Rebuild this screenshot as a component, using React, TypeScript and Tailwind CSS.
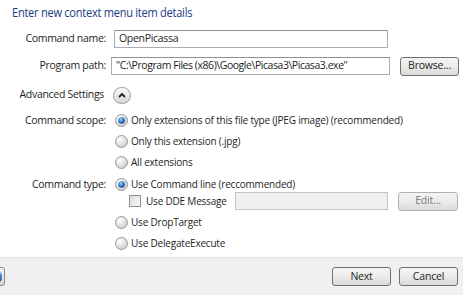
import React from 'react';

const font = { fontFamily: '"Open Sans", "Noto Sans", sans-serif' };

const Radio: React.FC<{ checked?: boolean }> = ({ checked }) => (
  <svg width="13" height="13" viewBox="0 0 13 13" className="shrink-0">
    <defs>
      <radialGradient id="rg" cx="0.35" cy="0.3" r="0.8">
        <stop offset="0" stopColor="#ffffff" />
        <stop offset="1" stopColor="#c8c8c8" />
      </radialGradient>
      <radialGradient id="rb" cx="0.4" cy="0.35" r="0.7">
        <stop offset="0" stopColor="#9cd3f5" />
        <stop offset="0.6" stopColor="#2a7bc0" />
        <stop offset="1" stopColor="#123f75" />
      </radialGradient>
    </defs>
    <circle cx="6.5" cy="6.5" r="6" fill="url(#rg)" stroke="#9a9a9a" strokeWidth="1" />
    {checked && <circle cx="6.5" cy="6.5" r="3.3" fill="url(#rb)" />}
  </svg>
);

const Button: React.FC<{ label: string; className?: string; disabled?: boolean }> = ({ label, className = '', disabled }) => (
  <div
    className={`h-[19px] shrink-0 flex items-center justify-center rounded-[3px] border text-[10.5px] tracking-[-0.2px] bg-gradient-to-b from-[#f4f4f4] via-[#ebebeb] to-[#d9d9d9] ${
      disabled ? 'border-[#adb2b5] text-[#7a7a7a]' : 'border-[#707070] text-[#1e1e1e]'
    } ${className}`}
  >
    {label}
  </div>
);

const Label: React.FC<{ children?: React.ReactNode }> = ({ children }) => (
  <div className="w-[106px] shrink-0 text-right text-[10.5px] tracking-[-0.3px] text-[#1e1e1e] whitespace-nowrap">{children}</div>
);

const Option: React.FC<{ label: string; checked?: boolean }> = ({ label, checked }) => (
  <div className="ml-[9px] flex items-center gap-[3px] text-[10px] tracking-[-0.2px] text-[#1e1e1e] whitespace-nowrap">
    <Radio checked={checked} />
    <span>{label}</span>
  </div>
);

export default function App() {
  return (
    <div className="w-[463px] h-[295px] bg-white flex flex-col overflow-hidden" style={font}>
      {/* Body */}
      <div className="flex-1 flex flex-col">
        <h1 className="text-[13px] tracking-[-0.3px] text-[#1c3a88] pl-[12px] pt-[2px] leading-[20px] whitespace-nowrap">
          <span className="inline-block scale-x-[0.85] origin-left">Enter new context menu item details</span>
        </h1>

        <div className="flex items-center mt-[8px] h-[18px]">
          <Label>Command name:</Label>
          <div className="ml-[8px] w-[274px] h-[18px] border border-[#abadb3] border-t-[#8f9194] flex items-center px-[4px] text-[10.5px] tracking-[-0.3px] text-[#1e1e1e]">
            OpenPicassa
          </div>
        </div>

        <div className="flex items-center mt-[9px] h-[18px]">
          <Label>Program path:</Label>
          <div className="ml-[5px] w-[279px] h-[18px] border border-[#abadb3] border-t-[#8f9194] flex items-center px-[4px] text-[10.5px] tracking-[-0.45px] text-[#1e1e1e] whitespace-nowrap">
            "C:\Program Files (x86)\Google\Picasa3\Picasa3.exe"
          </div>
          <Button label="Browse..." className="ml-[10px] w-[59px]" />
        </div>

        <div className="flex items-center mt-[11px] h-[18px]">
          <div className="w-[104px] shrink-0 text-right text-[10.5px] tracking-[-0.3px] text-[#1e1e1e] whitespace-nowrap">Advanced Settings</div>
          <div className="ml-[9px] w-[18px] h-[17px] rounded-full border border-[#9a9a9a] bg-gradient-to-b from-[#fafafa] to-[#d8d8d8] flex items-center justify-center">
            <svg width="8" height="6" viewBox="0 0 8 6">
              <path d="M1 5 L4 2 L7 5" fill="none" stroke="#222" strokeWidth="1.8" />
            </svg>
          </div>
        </div>

        <div className="flex items-center mt-[6px] h-[21px]">
          <Label>Command scope:</Label>
          <Option checked label="Only extensions of this file type (JPEG image) (recommended)" />
        </div>
        <div className="flex items-center h-[21px]">
          <Label />
          <Option label="Only this extension (.jpg)" />
        </div>
        <div className="flex items-center h-[21px]">
          <Label />
          <Option label="All extensions" />
        </div>

        <div className="flex items-center mt-[1px] h-[21px]">
          <Label>Command type:</Label>
          <Option checked label="Use Command line (reccommended)" />
        </div>
        <div className="flex items-center h-[18px] -mt-[3px]">
          <Label />
          <div className="ml-[23px] w-[106px] shrink-0 flex items-center gap-[5px] text-[10px] tracking-[-0.2px] text-[#1e1e1e] whitespace-nowrap">
            <div className="w-[12px] h-[12px] shrink-0 border border-[#8e8f8f] bg-gradient-to-br from-[#dcdcdc] to-[#fafafa]" />
            <span>Use DDE Message</span>
          </div>
          <div className="w-[153px] h-[18px] shrink-0 border border-[#c2c4c8] bg-[#f0f0f0]" />
          <Button label="Edit..." disabled className="ml-[10px] w-[60px]" />
        </div>

        <div className="flex items-center mt-[2px] h-[21px]">
          <Label />
          <Option label="Use DropTarget" />
        </div>
        <div className="flex items-center h-[21px]">
          <Label />
          <Option label="Use DelegateExecute" />
        </div>
      </div>

      {/* Footer */}
      <div className="h-[38px] bg-[#f0f0f0] border-t border-[#e3e3e3] flex items-center shrink-0">
        <div className="-ml-[14px] w-[19px] h-[19px] rounded-[3px] border border-[#8a8a8a] bg-gradient-to-b from-[#f4f4f4] to-[#d8d8d8] flex items-center justify-end pr-[2px]">
          <div className="w-[10px] h-[12px] rounded-full bg-gradient-to-b from-[#6fa9e6] to-[#1d4f9c]" />
        </div>
        <div className="flex-1" />
        <Button label="Next" className="w-[59px]" />
        <Button label="Cancel" className="ml-[8px] mr-[5px] w-[59px]" />
      </div>
    </div>
  );
}
